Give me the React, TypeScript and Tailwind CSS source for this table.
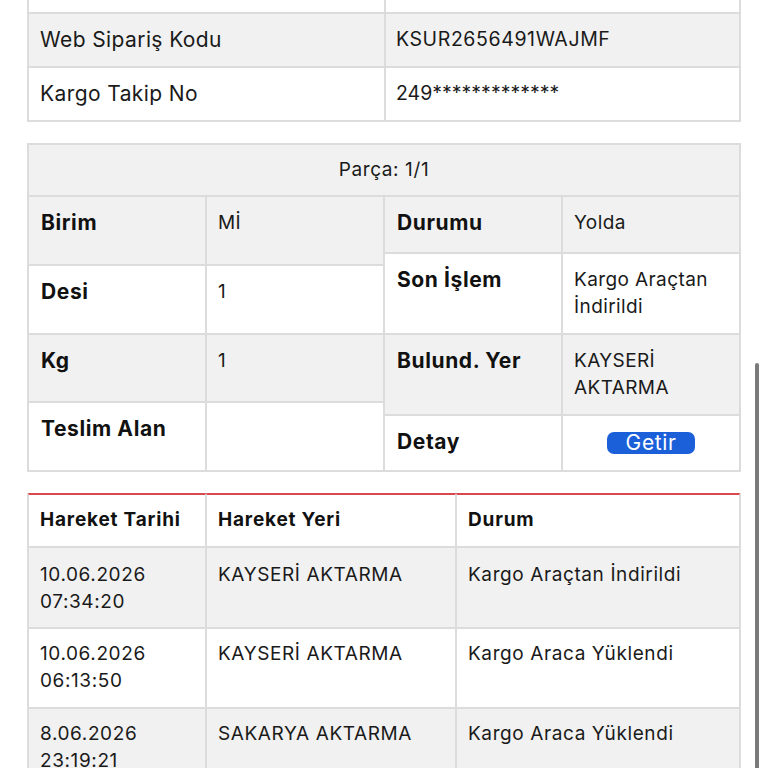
import React from "react";

const cell = "border border-[#dcdcdc]";

function Row1({ label, value, gray, h, vt }: { label: string; value: string; gray?: boolean; h: string; vt?: string }) {
  return (
    <div className={`flex ${h} ${gray ? "bg-[#f1f1f1]" : "bg-white"}`}>
      <div className={`${cell} w-[357px] flex items-center pl-[11px] text-[21px] tracking-[0.4px] text-[#1a1a1a]`}>{label}</div>
      <div className={`${cell} flex-1 flex items-center pl-[10px] text-[19.5px] ${vt ?? "tracking-[0.6px]"} text-[#1a1a1a]`}>{value}</div>
    </div>
  );
}

function KV({ label, value, gray, h, children }: { label: string; value?: string; gray?: boolean; h: string; children?: React.ReactNode }) {
  return (
    <div className={`flex ${h} ${gray ? "bg-[#f1f1f1]" : "bg-white"}`}>
      <div className={`${cell} w-[178px] px-[12px] pt-[12px] text-[21px] leading-[28px] font-bold tracking-[0.6px] text-[#111] whitespace-nowrap`}>{label}</div>
      <div className={`${cell} w-[178px] px-[11px] pt-[12px] text-[19px] leading-[27px] tracking-[0.4px] text-[#1a1a1a]`}>
        {children ?? value}
      </div>
    </div>
  );
}

function MoveRow({ date, time, place, status, gray, h, pt }: { date: string; time: string; place: string; status: string; gray?: boolean; h: string; pt: string }) {
  return (
    <div className={`flex ${h} ${gray ? "bg-[#f1f1f1]" : "bg-white"} text-[19px] leading-[27px] tracking-[0.6px] text-[#1a1a1a]`}>
      <div className={`${cell} w-[178px] px-[11px] ${pt}`}>
        <div>{date}</div>
        <div>{time}</div>
      </div>
      <div className={`${cell} w-[250px] px-[11px] ${pt}`}>{place}</div>
      <div className={`${cell} flex-1 px-[11px] ${pt}`}>{status}</div>
    </div>
  );
}

export default function App() {
  return (
    <div className="relative w-[768px] h-[768px] overflow-hidden bg-white" style={{ fontFamily: "Inter, 'Noto Sans', sans-serif" }}>
      <div className="px-[27px]">
        {/* Table 1 */}
        <div className="mt-[-42px] border border-[#dcdcdc]">
          <Row1 label="" value="" h="h-[54px]" />
          <Row1 label="Web Sipariş Kodu" value="KSUR2656491WAJMF" gray h="h-[54px]" />
          <Row1 label="Kargo Takip No" value="249*************" h="h-[54px]" vt="tracking-[0px]" />
        </div>

        {/* Table 2 */}
        <div className="mt-[21px] border border-[#dcdcdc] bg-[#f1f1f1]">
          <div className={`${cell} h-[52px] flex items-center justify-center text-[19px] tracking-[0.6px] text-[#1a1a1a]`}>Parça: 1/1</div>
          <div className="flex">
            <div className="flex flex-col w-[356px]">
              <KV label="Birim" value="Mİ" gray h="flex-1" />
              <KV label="Desi" value="1" h="flex-1" />
              <KV label="Kg" value="1" gray h="flex-1" />
              <KV label="Teslim Alan" value="" h="flex-1" />
            </div>
            <div className="flex flex-col w-[356px]">
              <KV label="Durumu" value="Yolda" gray h="h-[57px]" />
              <KV label="Son İşlem" value="Kargo Araçtan İndirildi" h="h-[81px]" />
              <KV label="Bulund. Yer" value="KAYSERİ AKTARMA" gray h="h-[81px]" />
              <KV label="Detay" h="h-[56px]">
                <div className="flex justify-center pt-[4px]">
                  <span className="inline-flex items-center justify-center w-[88px] h-[22px] rounded-[7px] bg-[#1b5fd9] text-white text-[21px] leading-[22px] tracking-[0.6px]">Getir</span>
                </div>
              </KV>
            </div>
          </div>
        </div>

        {/* Table 3 */}
        <div className="mt-[21px] border-x border-b border-[#dcdcdc]">
          <div className="flex h-[54px] bg-white text-[19px] leading-[27px] font-bold tracking-[0.8px] text-[#111]">
            <div className="w-[178px] border-x border-b border-[#dcdcdc] border-t-2 border-t-[#d9474f] px-[11px] pt-[11px] whitespace-nowrap">Hareket Tarihi</div>
            <div className="w-[250px] border-x border-b border-[#dcdcdc] border-t-2 border-t-[#d9474f] px-[11px] pt-[11px]">Hareket Yeri</div>
            <div className="flex-1 border-x border-b border-[#dcdcdc] border-t-2 border-t-[#d9474f] px-[11px] pt-[11px]">Durum</div>
          </div>
          <MoveRow date="10.06.2026" time="07:34:20" place="KAYSERİ AKTARMA" status="Kargo Araçtan İndirildi" gray h="h-[81px]" pt="pt-[13px]" />
          <MoveRow date="10.06.2026" time="06:13:50" place="KAYSERİ AKTARMA" status="Kargo Araca Yüklendi" h="h-[80px]" pt="pt-[11px]" />
          <MoveRow date="8.06.2026" time="23:19:21" place="SAKARYA AKTARMA" status="Kargo Araca Yüklendi" gray h="h-[82px]" pt="pt-[11px]" />
        </div>
      </div>

      {/* scrollbar */}
      <div className="absolute left-[755px] top-[363px] w-[4px] h-[420px] rounded-full bg-[#7b7b7b]" />
    </div>
  );
}
